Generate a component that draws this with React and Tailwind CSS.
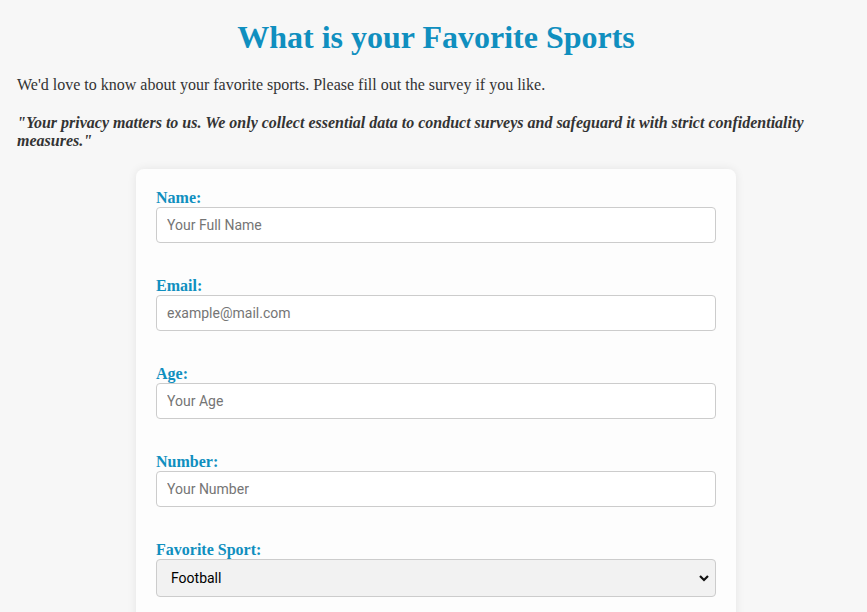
import React from 'react'

const fields = [
  { label: 'Name:', placeholder: 'Your Full Name', type: 'text' },
  { label: 'Email:', placeholder: 'example@mail.com', type: 'email' },
  { label: 'Age:', placeholder: 'Your Age', type: 'number' },
  { label: 'Number:', placeholder: 'Your Number', type: 'text' },
]

function Field({ label, placeholder, type }) {
  return (
    <div className="mb-[34px]">
      <label className="block text-[16px] font-bold leading-[18px] text-[#108fbf]">{label}</label>
      <input
        type={type}
        placeholder={placeholder}
        className="block h-9 w-full rounded border border-[#cccccc] bg-white px-[10px] font-['Roboto',sans-serif] text-[14px] text-black placeholder:text-[#757575] focus:outline-none"
      />
    </div>
  )
}

export default function App() {
  return (
    <div className="min-h-screen bg-[#f7f7f7] pl-[17px] pr-[12px] pt-[19px] font-['Liberation_Serif','Times_New_Roman',serif] text-[#333333]">
      <h1 className="text-center text-[32px] font-bold leading-[37px] text-[#108fbf]">What is your Favorite Sports</h1>
      <p className="mt-[20px] text-[16px] leading-[18px]">
        We'd love to know about your favorite sports. Please fill out the survey if you like.
      </p>
      <p className="mt-[20px] text-[16px] font-bold italic leading-[18px]">
        "Your privacy matters to us. We only collect essential data to conduct surveys and safeguard it with strict
        confidentiality measures."
      </p>
      <form className="mx-auto mt-[19px] w-[600px] rounded-lg bg-[#fdfdfd] p-5 shadow-[0_0_10px_rgba(0,0,0,0.08)]">
        {fields.map((f) => (
          <Field key={f.label} {...f} />
        ))}
        <div className="mb-[34px]">
          <label className="block text-[16px] font-bold leading-[18px] text-[#108fbf]">Favorite Sport:</label>
          <div className="relative">
            <select
              defaultValue="Football"
              className="block h-[38px] w-full appearance-none rounded border border-[#cccccc] bg-[#f2f2f2] pl-[14px] pr-8 font-['Roboto',sans-serif] text-[14px] text-black focus:outline-none"
            >
              <option>Football</option>
              <option>Basketball</option>
              <option>Tennis</option>
              <option>Cricket</option>
            </select>
            <svg
              className="pointer-events-none absolute right-[7px] top-[15px] h-[8px] w-[10px]"
              viewBox="0 0 10 8"
              fill="none"
              stroke="#111"
              strokeWidth="2.2"
            >
              <path d="M1 2l4 4 4-4" />
            </svg>
          </div>
        </div>
      </form>
    </div>
  )
}
